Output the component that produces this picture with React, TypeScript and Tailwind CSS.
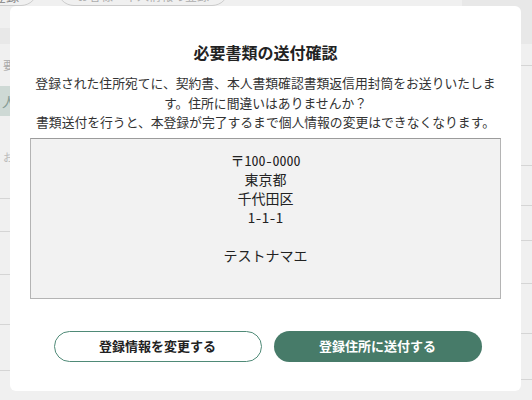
import React from 'react';

const jp = "font-['Noto_Sans_CJK_JP','Noto_Sans',sans-serif]";

function BackgroundPage() {
  return (
    <div className="flex flex-col w-full h-full bg-white">
      {/* header: tabs (mostly above the viewport) */}
      <div className="flex h-[28px]">
        <div className="flex-1 bg-white">
          <div className="flex items-end gap-[19px] h-[34px] -mt-[28px] -ml-[60px]">
            <div className="flex items-end justify-end h-full w-[98px] pr-[18px] pb-[1px] rounded-full border border-[#d9d9d9] text-[13px] leading-[16px] text-[#8a8a8a]">
              本登録
            </div>
            <div className="flex items-end justify-center h-full w-[172px] pb-[2px] rounded-full border border-[#d9d9d9] text-[12px] leading-[14px] text-[#b8b8b8]">
              お客様・本人情報の登録
            </div>
          </div>
        </div>
        <div className="w-[70px] bg-[#f7f7f7]" />
      </div>
      <div className="h-[16px] bg-[#f7f7f7]" />
      <div className="flex flex-1">
        {/* side menu */}
        <div className="flex flex-col w-[90px] text-[11px]">
          <div className="flex items-center h-[42px] pl-[3px] text-[#b5b5b5]">要確認</div>
          <div className="flex items-center h-[30px] pl-[2px] bg-[#dbe7e3] text-[#8fa69e] text-[14px]">人情報</div>
          <div className="flex items-center h-[82px] pl-[3px] text-[#c8c8c8]">お届け先</div>
          <div className="h-[33px] border-t border-[#e3e3e3]" />
          <div className="h-[43px] border-t border-[#e3e3e3]" />
          <div className="h-[50px] border-t border-[#e3e3e3]" />
          <div className="h-[46px] border-t border-[#e3e3e3]" />
          <div className="flex-1 border-t border-[#e3e3e3]" />
        </div>
        {/* content rows */}
        <div className="flex flex-col flex-1">
          <div className="h-[21px]" />
          <div className="h-[100px] border-t border-[#e3e3e3]" />
          <div className="h-[40px] border-t border-[#e3e3e3]" />
          <div className="h-[35px] border-t border-[#e3e3e3]" />
          <div className="h-[43px] border-t border-[#e3e3e3]" />
          <div className="h-[50px] border-t border-[#e3e3e3]" />
          <div className="h-[46px] border-t border-[#e3e3e3]" />
          <div className="flex-1 border-t border-[#e3e3e3]" />
        </div>
      </div>
    </div>
  );
}

export default function App() {
  const address = ['〒100-0000', '東京都', '千代田区', '1-1-1', '', 'テストナマエ'];

  return (
    <div className={`relative w-[532px] h-[400px] overflow-hidden ${jp}`}>
      <BackgroundPage />

      {/* overlay + dialog */}
      <div className="absolute inset-0 bg-black/[0.06] pt-[6px] pl-[10px]">
        <div className="flex flex-col w-[511px] h-[385px] rounded-[6px] bg-white px-[20px] pt-[34px]">
          <h2 className="text-[16px] leading-[24px] font-bold text-[#222] text-center">
            必要書類の送付確認
          </h2>

          <div className="mt-[9px] text-[12.8px] leading-[19.5px] text-[#333] text-center">
            <p>登録された住所宛てに、契約書、本人書類確認書類返信用封筒をお送りいたします。住所に間違いはありませんか？</p>
            <p>書類送付を行うと、本登録が完了するまで個人情報の変更はできなくなります。</p>
          </div>

          <div className="mt-[6px] h-[161px] border border-[#b4b4b4] border-t-[#9c9c9c] bg-[#f2f2f2] pt-[12px] text-center text-[14px] leading-[19.2px] text-[#222] font-['Noto_Sans_Mono_CJK_JP','DejaVu_Sans_Mono','Noto_Sans_CJK_JP',monospace]">
            {address.map((line, i) => (
              <div key={i} className="h-[19.2px]">
                {line}
              </div>
            ))}
          </div>

          <div className="flex justify-center gap-[12px] mt-[32px] pl-[4px]">
            <button className="w-[208px] h-[31px] rounded-full border border-[#4f8a77] bg-white text-[13px] font-bold text-[#222]">
              登録情報を変更する
            </button>
            <button className="w-[208px] h-[31px] rounded-full bg-[#477b69] text-[13px] font-bold text-white">
              登録住所に送付する
            </button>
          </div>
        </div>
      </div>
    </div>
  );
}
